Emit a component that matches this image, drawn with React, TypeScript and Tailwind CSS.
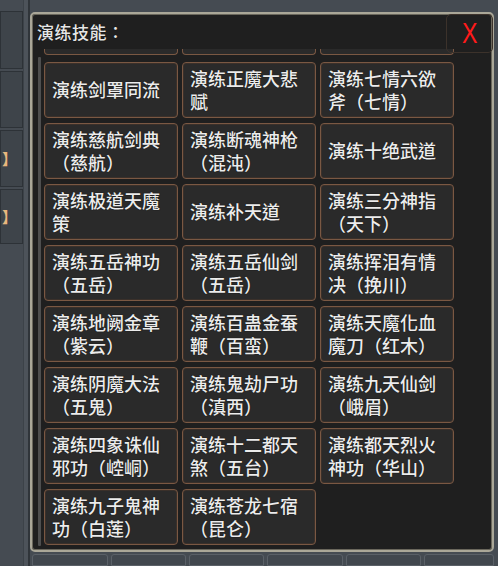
import React from "react";

const rows: string[][] = [
  ["演练剑罩同流", "演练正魔大悲赋", "演练七情六欲斧（七情）"],
  ["演练慈航剑典（慈航）", "演练断魂神枪（混沌）", "演练十绝武道"],
  ["演练极道天魔策", "演练补天道", "演练三分神指（天下）"],
  ["演练五岳神功（五岳）", "演练五岳仙剑（五岳）", "演练挥泪有情决（挽川）"],
  ["演练地阙金章（紫云）", "演练百蛊金蚕鞭（百蛮）", "演练天魔化血魔刀（红木）"],
  ["演练阴魔大法（五鬼）", "演练鬼劫尸功（滇西）", "演练九天仙剑（峨眉）"],
  ["演练四象诛仙邪功（崆峒）", "演练十二都天煞（五台）", "演练都天烈火神功（华山）"],
  ["演练九子鬼神功（白莲）", "演练苍龙七宿（昆仑）"],
];

const font = { fontFamily: '"Noto Sans CJK TC", "Noto Sans CJK SC", "Noto Sans", sans-serif' };

function Cell({ text }: { text: string }) {
  return (
    <div className="h-[56px] w-[134px] flex items-center pl-[7px] pr-[6px] rounded-[4px] border border-[#7a5843] bg-[#2a2a2a] shadow-[inset_0_0_0_1px_#3a302a]">
      <span className="text-[18px] leading-[23px] font-medium text-[#ececec] break-all [text-spacing-trim:space-all] [text-shadow:0_0_1px_#000]">
        {text}
      </span>
    </div>
  );
}

export default function App() {
  return (
    <div
      className="w-[498px] h-[566px] bg-[#454b52] flex overflow-hidden relative"
      style={font}
    >
      {/* left side panel */}
      <div className="w-[24px] flex flex-col pt-[11px] gap-[2px] border-r border-[#3c4248]">
        <div className="h-[58px] bg-[#3e444a] border border-[#2d3237]" />
        <div className="h-[57px] bg-[#3e444a] border border-[#2d3237]" />
        <div className="h-[57px] bg-[#3e444a] border border-[#2d3237] flex items-center justify-start pl-[1px]">
          <span className="text-[15px] text-[#e8b77e] leading-none font-bold">】</span>
        </div>
        <div className="h-[55px] bg-[#3e444a] border border-[#2d3237] flex items-center justify-start pl-[1px]">
          <span className="text-[15px] text-[#e8b77e] leading-none font-bold">】</span>
        </div>
      </div>
      <div className="w-[4px] bg-[#4d535a]" />
      <div className="w-[2px] bg-[#30353a]" />

      {/* main column */}
      <div className="flex flex-col w-[468px]">
        <div className="h-[12px] bg-[#454b52]" />
        {/* dialog */}
        <div className="relative w-[464px] h-[544px] rounded-[5px] border-2 border-[#aaa798] bg-[#1f1f1f] shadow-[inset_0_0_0_1px_#6a675c] flex flex-col">
          <div className="h-[35px] flex items-center pl-[5px]">
            <span className="text-[17px] font-medium text-[#e6e6e6] tracking-[0.5px] [text-spacing-trim:space-all] [text-shadow:0_0_1px_#000]">
              演练技能：
            </span>
          </div>
          <div className="absolute right-[-1px] top-0 w-[47px] h-[39px] rounded-[5px] border border-[#3c322b] flex items-center justify-center">
            <span
              className="text-[29px] leading-none text-[#ff1a1a] scale-x-[0.8]"
              style={{ fontFamily: '"Liberation Sans", sans-serif' }}
            >
              X
            </span>
          </div>
          <div className="flex pl-[6px]">
            <div className="w-[3px] mt-[8px] h-[489px] bg-[#4e4e4e] rounded-[1px]" />
            <div className="ml-[3px] flex flex-col">
              <div className="flex gap-[4px] h-[6px]">
                {[0, 1, 2].map((i) => (
                  <div
                    key={i}
                    className="w-[134px] h-[6px] rounded-b-[4px] border border-t-0 border-[#7a5843] bg-[#2a2a2a]"
                  />
                ))}
              </div>
              <div className="mt-[7px] flex flex-col gap-[5px]">
                {rows.map((r, i) => (
                  <div key={i} className="flex gap-[4px]">
                    {r.map((t) => (
                      <Cell key={t} text={t} />
                    ))}
                  </div>
                ))}
              </div>
            </div>
          </div>
        </div>
        {/* bottom strip */}
        <div className="mt-[2px] flex gap-[3px] pl-[2px]">
          {[76, 75, 75, 76, 75, 70].map((w, i) => (
            <div
              key={i}
              style={{ width: w }}
              className="h-[12px] rounded-t-[3px] border border-[#5a6067] bg-[#41474e]"
            />
          ))}
        </div>
      </div>
      <div className="flex-1 bg-[#3a4047]" />
    </div>
  );
}
